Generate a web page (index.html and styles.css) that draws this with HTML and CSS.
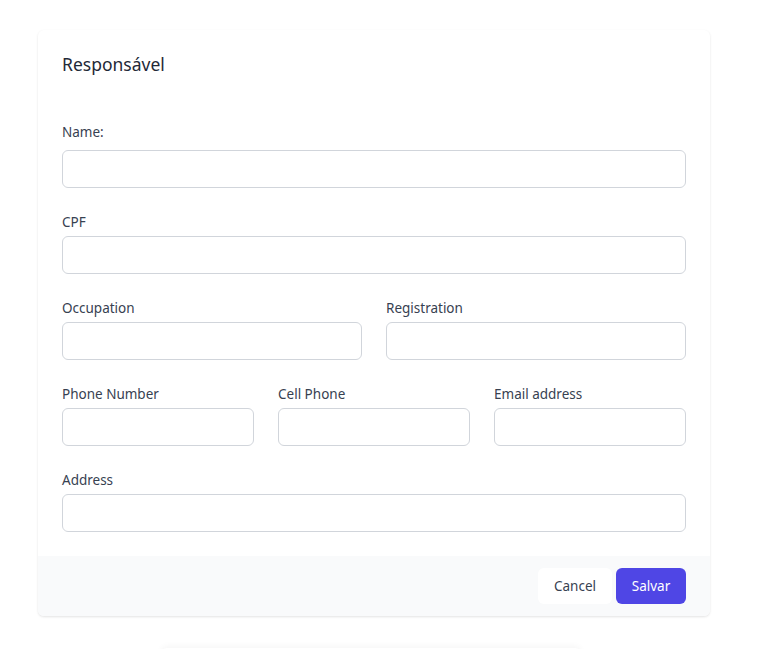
FILE: index.html
```html
<!DOCTYPE html>
<html lang="pt">
<head>
<meta charset="utf-8">
<link rel="stylesheet" href="styles.css">
</head>
<body>
<div class="page">
  <form class="card">
    <div class="card-body">
      <h2 class="title">Responsável</h2>
      <div class="fields">
        <div class="field first">
          <label class="label">Name:</label>
          <input class="input" type="text">
        </div>
        <div class="field">
          <label class="label">CPF</label>
          <input class="input" type="text">
        </div>
        <div class="row cols-2">
          <div class="field">
            <label class="label">Occupation</label>
            <input class="input" type="text">
          </div>
          <div class="field">
            <label class="label">Registration</label>
            <input class="input" type="text">
          </div>
        </div>
        <div class="row cols-3">
          <div class="field">
            <label class="label">Phone Number</label>
            <input class="input" type="text">
          </div>
          <div class="field">
            <label class="label">Cell Phone</label>
            <input class="input" type="text">
          </div>
          <div class="field">
            <label class="label">Email address</label>
            <input class="input" type="text">
          </div>
        </div>
        <div class="field">
          <label class="label">Address</label>
          <input class="input" type="text">
        </div>
      </div>
    </div>
    <div class="card-footer">
      <button type="button" class="btn btn-cancel">Cancel</button>
      <button type="submit" class="btn btn-save">Salvar</button>
    </div>
  </form>
  <div class="next-card"></div>
</div>
</body>
</html>
```

FILE: styles.css
```css
* { box-sizing: border-box; }
html, body { margin: 0; padding: 0; background: #ffffff; }
body {
  font-family: "Noto Sans", "Open Sans", sans-serif;
  color: #374151;
}
.page {
  padding: 30px 51px 0 38px;
  display: flex;
  flex-direction: column;
  align-items: stretch;
}
.card {
  width: 672px;
  background: #fff;
  border-radius: 6px;
  box-shadow: 0 1px 3px rgba(0,0,0,0.08), 0 1px 2px rgba(0,0,0,0.04);
  overflow: hidden;
}
.card-body {
  padding: 22px 24px 24px;
}
.title {
  margin: 0;
  font-size: 17.5px;
  line-height: 24px;
  font-weight: 400;
  color: #1f2937;
}
.fields {
  margin-top: 46px;
  display: flex;
  flex-direction: column;
  gap: 24px;
}
.row { display: grid; gap: 24px; }
.cols-2 { grid-template-columns: 1fr 1fr; }
.cols-3 { grid-template-columns: 1fr 1fr 1fr; }
.field { display: flex; flex-direction: column; }
.label {
  font-size: 13.5px;
  line-height: 20px;
  color: #374151;
  margin-bottom: 4px;
}
.first .label { margin-bottom: 8px; }
.input {
  height: 38px;
  border: 1px solid #d1d5db;
  border-radius: 6px;
  background: #fff;
  font: inherit;
  width: 100%;
}
.card-footer {
  background: #f9fafb;
  padding: 12px 24px 12px;
  display: flex;
  justify-content: flex-end;
  gap: 4px;
}
.btn {
  font-family: inherit;
  font-size: 13.5px;
  line-height: 20px;
  height: 36px;
  border-radius: 6px;
  border: none;
  padding: 0 12px;
  cursor: pointer;
}
.btn-cancel {
  background: #fff;
  color: #374151;
  width: 74px;
}
.btn-save {
  background: #4f46e5;
  color: #fff;
  width: 70px;
}
.next-card {
  margin: 32px auto 0;
  width: 420px;
  height: 20px;
  border-radius: 6px;
  box-shadow: 0 -2px 6px rgba(0,0,0,0.04);
  transform: translateX(-3px);
}
```
